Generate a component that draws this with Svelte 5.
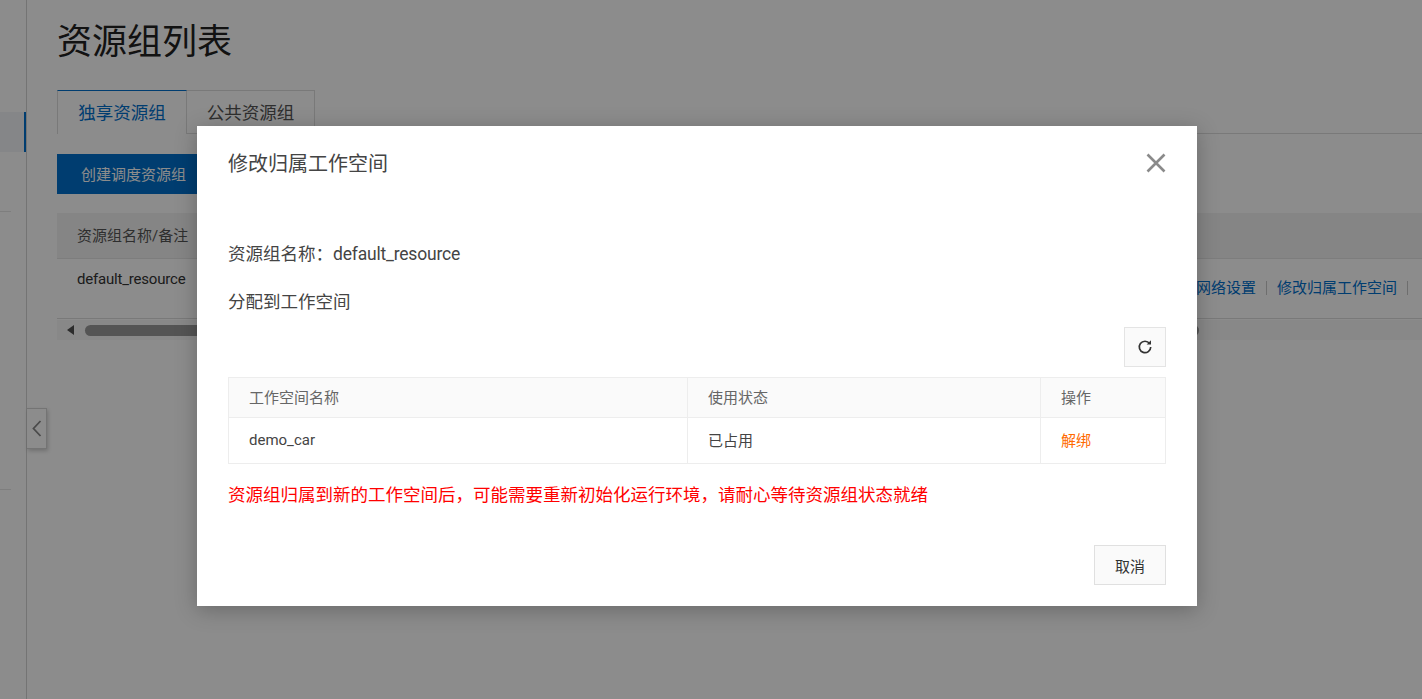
<script lang="ts">
  const workspaces = [{ name: "demo_car", status: "已占用", action: "解绑" }];
</script>

<div class="page">
  <aside class="side">
    <div class="side-active"></div>
    <div class="side-line first"></div>
    <div class="side-line second"></div>
  </aside>
  <button class="collapse" aria-label="收起">
    <svg width="10" height="17" viewBox="0 0 10 17"><path d="M8.500 1 1.500 8.500l7 7.500" fill="none" stroke="#888" stroke-width="1.800" /></svg>
  </button>

  <main class="main">
    <h1>资源组列表</h1>
    <div class="tabs">
      <div class="tab active">独享资源组</div>
      <div class="tab">公共资源组</div>
    </div>
    <div class="toolbar">
      <button class="primary">创建调度资源组</button>
    </div>
    <div class="list">
      <div class="list-head">资源组名称/备注</div>
      <div class="list-row">
        <span class="latin">default_resource</span>
        <div class="links">
          <a href="#net">网络设置</a>
          <i></i>
          <a href="#ws">修改归属工作空间</a>
          <i></i>
        </div>
      </div>
      <div class="scrollbar">
        <span class="arrow"></span>
        <span class="thumb"></span>
      </div>
    </div>
  </main>

  <div class="mask"></div>

  <div class="dialog">
    <header>
      <h2>修改归属工作空间</h2>
      <button class="close" aria-label="关闭">
        <svg width="20" height="20" viewBox="0 0 20 20"><path d="M1.500 1.500l17 17M18.500 1.500l-17 17" stroke="#8a8a8a" stroke-width="2.600" fill="none" /></svg>
      </button>
    </header>
    <div class="body">
      <p class="name">资源组名称：<span class="latin">default_resource</span></p>
      <p class="assign">分配到工作空间</p>
      <div class="refresh-row">
        <button class="refresh" aria-label="刷新">
          <svg width="16" height="16" viewBox="0 0 16 16">
            <path d="M12.600 4.600A5.700 5.700 0 1 0 13.700 8" fill="none" stroke="#333" stroke-width="1.700" />
            <path d="M9.600 5.400h4.400V1.200z" fill="#333" />
          </svg>
        </button>
      </div>
      <table>
        <colgroup>
          <col style="width: 459px" />
          <col style="width: 353px" />
          <col />
        </colgroup>
        <thead>
          <tr>
            <th>工作空间名称</th>
            <th>使用状态</th>
            <th>操作</th>
          </tr>
        </thead>
        <tbody>
          {#each workspaces as ws}
            <tr>
              <td>{ws.name}</td>
              <td>{ws.status}</td>
              <td class="unbind">{ws.action}</td>
            </tr>
          {/each}
        </tbody>
      </table>
      <p class="warn">资源组归属到新的工作空间后，可能需要重新初始化运行环境，请耐心等待资源组状态就绪</p>
    </div>
    <footer>
      <button class="cancel">取消</button>
    </footer>
  </div>
</div>

<style>
  :global(body) {
    margin: 0;
    background: #fff;
  }

  .page {
    position: relative;
    display: flex;
    width: 1422px;
    height: 699px;
    overflow: hidden;
    font-family: Roboto, "Noto Sans CJK SC", sans-serif;
    color: #333;
    background: #fff;
  }

  .latin {
    letter-spacing: -0.2px;
  }

  .side {
    position: relative;
    flex: none;
    width: 26px;
    border-right: 1px solid #d4d4d4;
    box-sizing: content-box;
  }

  .side-active {
    position: absolute;
    top: 112px;
    left: 0;
    width: 24px;
    height: 40px;
    background: #f2f4f7;
    border-right: 2px solid #0070cc;
  }

  .side-line {
    position: absolute;
    left: 0;
    width: 11px;
    height: 1px;
    background: #e6e6e6;
  }

  .side-line.first {
    top: 211px;
  }

  .side-line.second {
    top: 489px;
  }

  .collapse {
    position: absolute;
    top: 408px;
    left: 27px;
    display: flex;
    align-items: center;
    justify-content: center;
    width: 20px;
    height: 41px;
    padding: 0;
    background: #fff;
    border: 1px solid #d4d4d4;
    border-left: 0;
    box-sizing: border-box;
    box-shadow: 1px 2px 4px rgba(0, 0, 0, 0.2);
  }

  .main {
    flex: 1;
    min-width: 0;
    padding: 16px 0 0 30px;
  }

  h1 {
    margin: 0;
    height: 50px;
    font-size: 35px;
    font-weight: 400;
    line-height: 54px;
    color: #222;
  }

  .tabs {
    display: flex;
    margin-top: 24px;
    height: 43px;
    border-bottom: 1px solid #dcdcdc;
  }

  .tab {
    width: 128px;
    height: 44px;
    box-sizing: border-box;
    border: 1px solid #dcdcdc;
    border-left: 0;
    font-size: 17.5px;
    line-height: 44px;
    text-align: center;
    color: #555;
    background: #fff;
  }

  .tab.active {
    width: 130px;
    border-left: 1px solid #dcdcdc;
    border-top: 1px solid #0070cc;
    border-bottom: 0;
    color: #0070cc;
  }

  .toolbar {
    margin-top: 20px;
  }

  .primary {
    display: block;
    width: 180px;
    height: 40px;
    padding: 0 0 2px 24px;
    font: inherit;
    font-size: 15px;
    text-align: left;
    color: #fff;
    background: #0070cc;
    border: 0;
  }

  .list {
    margin-top: 19px;
  }

  .list-head {
    height: 45px;
    padding-left: 20px;
    font-size: 15px;
    line-height: 47px;
    color: #555;
    background: #f2f2f2;
    border-bottom: 1px solid #e4e4e4;
  }

  .list-row {
    display: flex;
    justify-content: space-between;
    height: 59px;
    padding: 0 14px 0 20px;
    font-size: 15px;
    line-height: 40px;
    border-bottom: 1px solid #dcdcdc;
  }

  .links {
    display: flex;
    align-items: center;
    gap: 10px;
    height: 58px;
  }

  .links a {
    color: #0070cc;
    text-decoration: none;
    line-height: 58px;
  }

  .links i {
    width: 1px;
    height: 14px;
    background: #c8c8c8;
  }

  .scrollbar {
    display: flex;
    align-items: center;
    gap: 11px;
    height: 20px;
    margin-top: 1px;
    padding-left: 10px;
    background: #f7f7f7;
  }

  .arrow {
    width: 0;
    height: 0;
    border-top: 5px solid transparent;
    border-bottom: 5px solid transparent;
    border-right: 7px solid #505050;
  }

  .thumb {
    width: 1114px;
    height: 11px;
    border-radius: 6px;
    background: #9a9a9a;
  }

  .mask {
    position: absolute;
    inset: 0;
    background: rgba(0, 0, 0, 0.45);
  }

  .dialog {
    position: absolute;
    top: 126px;
    left: 197px;
    display: flex;
    flex-direction: column;
    width: 1000px;
    height: 480px;
    padding: 0 31px;
    box-sizing: border-box;
    background: #fff;
    box-shadow: 0 4px 20px rgba(0, 0, 0, 0.25);
  }

  header {
    display: flex;
    align-items: center;
    justify-content: space-between;
    height: 75px;
    flex: none;
  }

  h2 {
    margin: 0 0 2px;
    font-size: 20px;
    font-weight: 400;
    color: #444;
  }

  .close {
    display: flex;
    width: 20px;
    height: 20px;
    margin-bottom: 2px;
    padding: 0;
    background: none;
    border: 0;
  }

  .body {
    flex: 1;
  }

  .name,
  .assign,
  .warn {
    margin: 0;
    font-size: 17.5px;
    line-height: 24px;
    color: #444;
  }

  .name {
    margin-top: 41px;
  }

  .assign {
    margin-top: 24px;
  }

  .refresh-row {
    display: flex;
    justify-content: flex-end;
    margin-top: 13px;
  }

  .refresh {
    display: flex;
    align-items: center;
    justify-content: center;
    width: 42px;
    height: 40px;
    padding: 0;
    background: #fafafa;
    border: 1px solid #e4e4e4;
  }

  table {
    width: 938px;
    margin-top: 10px;
    table-layout: fixed;
    border-collapse: collapse;
    font-size: 15px;
  }

  th,
  td {
    padding: 0 20px 2px;
    text-align: left;
    font-weight: 400;
    border: 1px solid #ededed;
    box-sizing: border-box;
  }

  th {
    height: 40px;
    color: #666;
    background: #fafafa;
  }

  td {
    height: 46px;
    color: #444;
  }

  td.unbind {
    color: #ff6a00;
  }

  .warn {
    margin-top: 19px;
    color: #ff0000;
  }

  footer {
    display: flex;
    justify-content: flex-end;
    flex: none;
    height: 61px;
  }

  .cancel {
    width: 72px;
    height: 40px;
    padding: 0;
    font: inherit;
    font-size: 15px;
    color: #333;
    background: #fafafa;
    border: 1px solid #e0e0e0;
  }
</style>
